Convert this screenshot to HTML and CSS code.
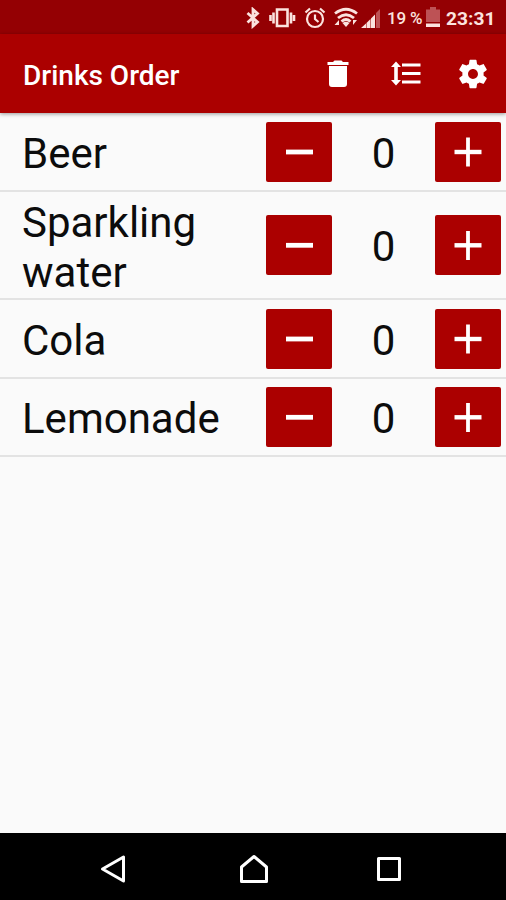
FILE: index.html
```html
<!DOCTYPE html>
<html lang="en">
<head>
<meta charset="utf-8">
<title>Drinks Order</title>
<link rel="stylesheet" href="styles.css">
</head>
<body>
<div class="status">
  <svg class="bt" width="14" height="22" viewBox="0 0 14 22"><path d="M1.500 6l10 9-4.500 4V2.500l4.500 4-10 9" fill="none" stroke="currentColor" stroke-width="2.800"/></svg>
  <svg class="vibrate" width="28" height="20" viewBox="0 0 28 20"><path d="M8 1.500h10.500v16.500H8z" fill="none" stroke="currentColor" stroke-width="2.600"/><path d="M4.500 4.500v11M22 4.500v11M1.500 7v6M25 7v6" stroke="currentColor" stroke-width="2.600"/></svg>
  <svg class="alarm" width="22" height="22" viewBox="0 0 22 22" fill="none" stroke="currentColor" stroke-width="2.200"><circle cx="11" cy="12" r="8"/><path d="M11 7.500V12l3.500 3M1.500 5.500l4.500-4M20.500 5.500l-4.500-4"/></svg>
  <svg class="wifi" width="24" height="21" viewBox="0 0 24 21"><path d="M1 6.500Q12-2 23 6.500M4 11Q12 4.500 20 11M7.500 14.500Q12 10.500 16.500 14.500" fill="none" stroke="currentColor" stroke-width="2.800"/><path d="M8.500 16Q12 13.500 15.500 16L12 20zM5 13v5H.500zM19 18v-5l4 0z" fill="currentColor"/></svg>
  <svg class="signal" width="20" height="20" viewBox="0 0 20 20"><path d="M19 1v19h-4V5z" fill="#bd5255"/><path d="M14 6.500V20h-4V10.500zM9.500 11v9h-4v-5zM5 15.500V20H0z" fill="currentColor"/></svg>
  <span class="percent">19 %</span>
  <svg class="battery" width="14" height="21" viewBox="0 0 14 21"><path d="M0 2.500h4V0h6v2.500h4V15H0z" fill="#bd5255"/><path d="M0 16.500h14v3.500H0z" fill="currentColor"/></svg>
  <span class="clock">23:31</span>
</div>
<header class="appbar">
  <h1>Drinks Order</h1>
  <svg class="trash" width="22" height="28" viewBox="0 0 22 28" fill="currentColor"><path d="M.5 2H6l1.500-1.500h7L16 2h5.500v3H.5zM2 6h18v18q0 3-3 3H5q-3 0-3-3z"/></svg>
  <svg class="spacing" width="30" height="25" viewBox="0 0 30 25" fill="currentColor"><path d="M5 .5L10 6H6.800v13H10l-5 5.500L0 19h3.200V6H0zM11 2.500h18.500v3H11zM11 11h18.500v3H11zM11 19.500h18.500v3H11z"/></svg>
  <svg class="gear" width="34" height="34" viewBox="0 0 24 24" fill="currentColor"><path d="M19.430 12.980c.04-.32.07-.64.07-.98s-.03-.66-.07-.98l2.110-1.650c.19-.15.24-.42.120-.64l-2-3.460c-.12-.22-.39-.3-.61-.22l-2.490 1c-.52-.4-1.080-.73-1.690-.98l-.38-2.650C14.460 2.180 14.250 2 14 2h-4c-.25 0-.46.180-.49.420l-.38 2.650c-.61.250-1.170.590-1.690.980l-2.490-1c-.23-.09-.49 0-.61.220l-2 3.460c-.13.220-.07.490.120.640l2.110 1.650c-.04.320-.07.650-.07.980s.03.660.070.980l-2.110 1.650c-.19.150-.24.420-.12.640l2 3.460c.12.220.39.300.61.220l2.490-1c.52.400 1.080.730 1.690.980l.38 2.650c.03.240.24.420.49.420h4c.25 0 .46-.18.49-.42l.38-2.650c.61-.25 1.170-.59 1.690-.98l2.490 1c.23.090.49 0 .61-.22l2-3.460c.12-.22.070-.49-.12-.64zM12 15.500c-1.930 0-3.500-1.570-3.500-3.500s1.570-3.500 3.500-3.500 3.500 1.570 3.500 3.500-1.570 3.500-3.500 3.500z"/></svg>
</header>
<main>
  <div class="row">
    <span class="name">Beer</span>
    <button class="btn" aria-label="Less"><svg width="66" height="60" viewBox="0 0 66 60"><path d="M20 30h27" stroke="#fff" stroke-width="4.800"/></svg></button>
    <span class="count">0</span>
    <button class="btn" aria-label="More"><svg width="66" height="60" viewBox="0 0 66 60"><path d="M19.500 30h27" stroke="#fff" stroke-width="4.400"/><path d="M33 15.500v29" stroke="#fff" stroke-width="3.800"/></svg></button>
  </div>
  <div class="row tall">
    <span class="name">Sparkling water</span>
    <button class="btn" aria-label="Less"><svg width="66" height="60" viewBox="0 0 66 60"><path d="M20 30.300h27" stroke="#fff" stroke-width="4.800"/></svg></button>
    <span class="count">0</span>
    <button class="btn" aria-label="More"><svg width="66" height="60" viewBox="0 0 66 60"><path d="M19.500 30.300h27" stroke="#fff" stroke-width="4.400"/><path d="M33 16v29" stroke="#fff" stroke-width="3.800"/></svg></button>
  </div>
  <div class="row">
    <span class="name">Cola</span>
    <button class="btn" aria-label="Less"><svg width="66" height="60" viewBox="0 0 66 60"><path d="M20 30h27" stroke="#fff" stroke-width="4.800"/></svg></button>
    <span class="count">0</span>
    <button class="btn" aria-label="More"><svg width="66" height="60" viewBox="0 0 66 60"><path d="M19.500 30h27" stroke="#fff" stroke-width="4.400"/><path d="M33 15.500v29" stroke="#fff" stroke-width="3.800"/></svg></button>
  </div>
  <div class="row">
    <span class="name">Lemonade</span>
    <button class="btn" aria-label="Less"><svg width="66" height="60" viewBox="0 0 66 60"><path d="M20 30.300h27" stroke="#fff" stroke-width="4.800"/></svg></button>
    <span class="count">0</span>
    <button class="btn" aria-label="More"><svg width="66" height="60" viewBox="0 0 66 60"><path d="M19.500 30.300h27" stroke="#fff" stroke-width="4.400"/><path d="M33 16v29" stroke="#fff" stroke-width="3.800"/></svg></button>
  </div>
</main>
<nav class="navbar">
  <svg width="32" height="32" viewBox="0 0 32 32"><path d="M5.500 16L26.500 4v24z"/></svg>
  <svg class="home" width="32" height="32" viewBox="0 0 32 32"><path d="M3.500 14L16 3.500 28.500 14v14.500h-25z"/></svg>
  <svg width="32" height="32" viewBox="0 0 32 32"><path d="M5.500 5.500h21v21h-21z"/></svg>
</nav>
</body>
</html>
```

FILE: styles.css
```css
* { box-sizing: border-box; }
body {
  margin: 0;
  height: 900px;
  display: flex;
  flex-direction: column;
  overflow: hidden;
  background: #fafafa;
  color: #0c0c0c;
  font-family: Roboto, "Liberation Sans", sans-serif;
}
svg { display: block; flex: none; }
.status {
  height: 34px;
  display: flex;
  align-items: center;
  padding: 1px 0 0 246px;
  background: #940003;
  color: #fbe3df;
  white-space: nowrap;
}
.vibrate { margin-left: 9px; }
.alarm { margin-left: 7px; }
.wifi { margin-left: 8px; }
.signal { margin-left: 3px; }
.percent { width: 34px; margin-left: 6px; padding-top: 1px; font-size: 17px; font-weight: 500; letter-spacing: -.2px; }
.battery { margin-left: 5px; }
.clock { margin-left: 6px; padding-top: 1px; font-size: 19.200px; font-weight: 700; }
.appbar {
  height: 79px;
  display: flex;
  align-items: center;
  padding-left: 23px;
  background: #ab0000;
  color: #fff;
  box-shadow: 0 1px 4px rgba(0, 0, 0, .4);
}
h1 { width: 304px; margin: 4px 0 0; font-size: 28px; line-height: 32px; font-weight: 500; }
.spacing { margin-left: 42px; }
.gear { margin-left: 35px; }
main { flex: 1; }
.row {
  height: 78.750px;
  display: flex;
  align-items: center;
  padding: 1px 5px 0 22px;
  border-bottom: 2px solid #e3e3e3;
}
.tall { height: 108px; }
.name { width: 244px; padding: 4px 40px 0 0; font-size: 42px; line-height: 50px; }
.tall .name { padding-top: 6px; }
.btn { flex: none; width: 66px; height: 60px; padding: 0; border: 0; border-radius: 2px; background: #ab0000; }
.count { width: 103px; padding-top: 4px; text-align: center; font-size: 42px; line-height: 50px; }
.navbar {
  height: 67px;
  display: flex;
  justify-content: space-between;
  align-items: center;
  padding: 4px 101px 0 97px;
  background: #000;
}
.home { margin-left: 5px; }
.navbar path { fill: none; stroke: #fff; stroke-width: 3; stroke-linejoin: round; }
```
